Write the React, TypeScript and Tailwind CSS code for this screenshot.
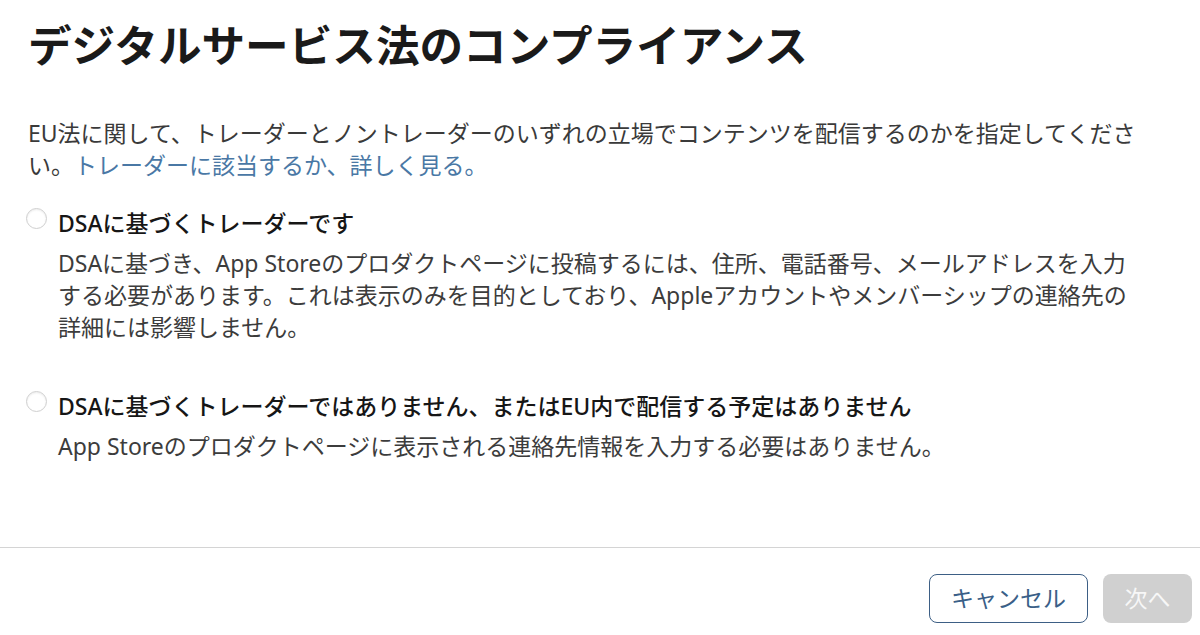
import React from "react";

const font = { fontFamily: '"Noto Sans", "Noto Sans CJK JP", sans-serif' };

function Radio() {
    return (
        <span className="mt-[1px] block h-[21px] w-[21px] shrink-0 rounded-full border border-[#cfcfcf] bg-white shadow-[inset_0_1px_2px_rgba(0,0,0,0.08)]" />
    );
}

function Option({ title, children }: { title: string; children: React.ReactNode }) {
    return (
        <div className="flex items-start gap-[11px]">
            <Radio />
            <div>
                <div className="text-[23px] font-medium leading-[32px] text-[#161616]">{title}</div>
                <p className="mt-[8px] text-[23px] leading-[32px] text-[#3c3c3c]">{children}</p>
            </div>
        </div>
    );
}

export default function App() {
    return (
        <div className="flex h-[635px] w-[1200px] flex-col bg-white" style={font}>
            <div className="flex-1 px-[28px]">
                <h1 className="mt-[21px] text-[43.6px] font-bold leading-[48px] text-[#1a1a1a]">
                    デジタルサービス法のコンプライアンス
                </h1>
                <p className="mt-[48px] text-[23px] leading-[32px] text-[#3a3a3a]">
                    EU法に関して、トレーダーとノントレーダーのいずれの立場でコンテンツを配信するのかを指定してくださ
                    <br />
                    い。
                    <a href="#" className="text-[#4a78a5]">
                        トレーダーに該当するか、詳しく見る。
                    </a>
                </p>

                <div className="ml-[-2px] mt-[26px] flex flex-col gap-[47px]">
                    <Option title="DSAに基づくトレーダーです">
                        DSAに基づき、App Storeのプロダクトページに投稿するには、住所、電話番号、メールアドレスを入力
                        <br />
                        する必要があります。これは表示のみを目的としており、Appleアカウントやメンバーシップの連絡先の
                        <br />
                        詳細には影響しません。
                    </Option>
                    <Option title="DSAに基づくトレーダーではありません、またはEU内で配信する予定はありません">
                        App Storeのプロダクトページに表示される連絡先情報を入力する必要はありません。
                    </Option>
                </div>
            </div>

            <div className="border-t border-[#d4d4d4]">
                <div className="flex justify-end gap-[15px] pb-[12px] pr-[8px] pt-[26px]">
                    <button className="h-[49px] w-[159px] rounded-[8px] border-[1.5px] border-[#3d5f85] bg-white text-[23px] text-[#3a5f88]">
                        キャンセル
                    </button>
                    <button className="h-[49px] w-[89px] rounded-[8px] bg-[#d0d0d0] text-[23px] text-[#f7f7f7]">
                        次へ
                    </button>
                </div>
            </div>
        </div>
    );
}
